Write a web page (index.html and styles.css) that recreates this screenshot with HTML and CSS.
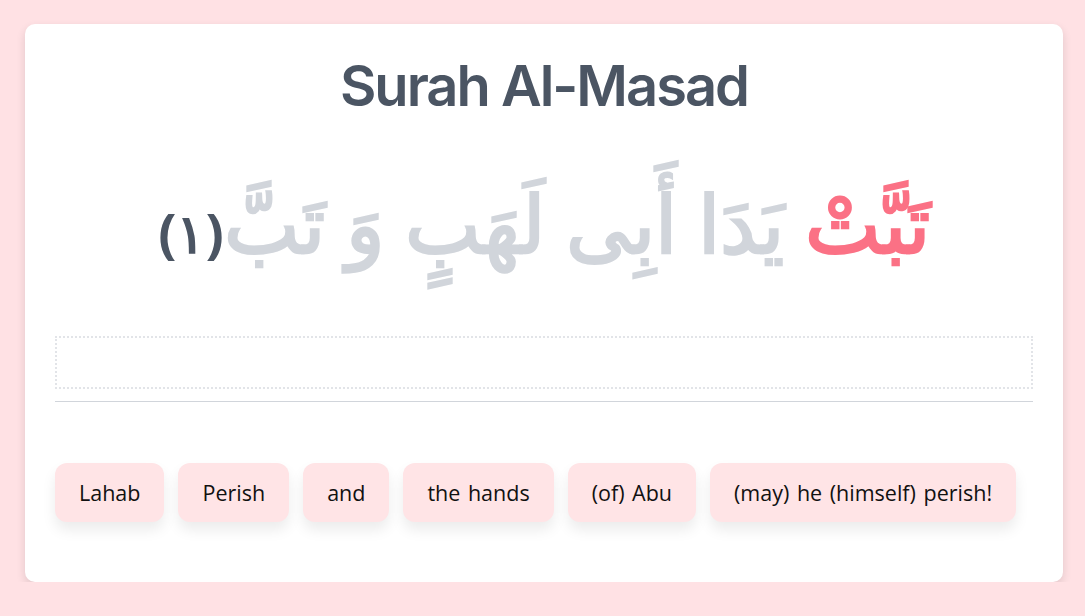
FILE: index.html
```html
<!DOCTYPE html>
<html lang="en">
<head>
<meta charset="utf-8">
<title>Surah Al-Masad</title>
<link rel="stylesheet" href="styles.css">
</head>
<body>
<main class="card">
  <h1 class="title">Surah Al-Masad</h1>
  <p class="verse" dir="rtl" lang="ar"><span class="done">تَبَّتْ</span> <span class="rest">يَدَا أَبِى لَهَبٍ وَ تَبَّ</span><span class="num">(١)</span></p>
  <div class="dropzone"></div>
  <hr class="rule">
  <div class="words">
    <button class="word">Lahab</button>
    <button class="word">Perish</button>
    <button class="word">and</button>
    <button class="word">the hands</button>
    <button class="word">(of) Abu</button>
    <button class="word">(may) he (himself) perish!</button>
  </div>
</main>
</body>
</html>
```
FILE: styles.css
```css
html, body {
  margin: 0;
  padding: 0;
  background: #ffe1e4;
}
body {
  padding: 24px 22px 0 25px;
  font-family: "Open Sans", sans-serif;
}
.card {
  background: #fff;
  border-radius: 10px;
  box-shadow: 0 4px 10px rgba(0,0,0,0.12);
  padding: 30px 30px 60px;
  height: 558px;
  box-sizing: border-box;
}
.title {
  margin: 0;
  text-align: center;
  font-family: Inter, sans-serif;
  font-weight: 600;
  font-size: 56px;
  letter-spacing: -2px;
  line-height: 64px;
  color: #4b5563;
}
.verse {
  margin: 29px 0 0;
  text-align: center;
  font-size: 80px;
  line-height: 150px;
  height: 150px;
  font-family: "Noto Sans", sans-serif;
  font-weight: 600;
}
.done { color: #fb7185; }
.rest { color: #d1d5db; }
.num { color: #4b5563; font-weight: bold; font-size: 54px; }
.dropzone {
  margin-top: 39px;
  height: 53px;
  border: 2px dotted #e2e4e8;
  box-sizing: border-box;
}
.rule {
  margin: 12px 0 0;
  border: 0;
  border-top: 1px solid #d1d5db;
}
.words {
  display: flex;
  gap: 14px;
  margin-top: 61px;
}
.word {
  border: 0;
  background: #ffe4e6;
  border-radius: 12px;
  padding: 0 24px;
  height: 59px;
  font-family: "Open Sans", sans-serif;
  font-size: 21.5px;
  word-spacing: 2px;
  color: #111;
  box-shadow: 0 8px 14px rgba(0,0,0,0.08);
}
```
